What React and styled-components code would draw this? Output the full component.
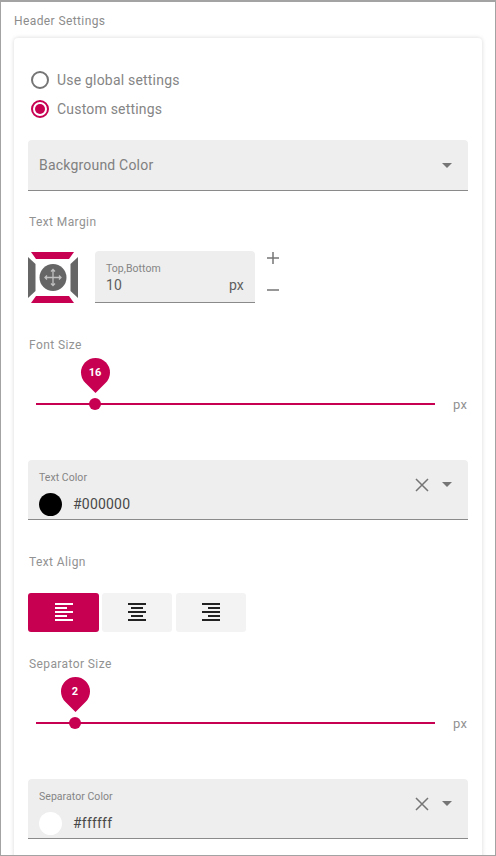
import styled, { createGlobalStyle } from 'styled-components'

const accent = '#c70052'

const Global = createGlobalStyle`
  html, body { margin: 0; padding: 0; background: #fff; }
  body { font-family: Roboto, "Liberation Sans", sans-serif; }
`

const Frame = styled.div`
  box-sizing: border-box;
  width: 496px;
  height: 856px;
  overflow: hidden;
  border: 1px solid #a3a3a3;
  border-top-width: 2px;
  background: #fff;
`

const Title = styled.div`
  margin: 11px 0 0 13px;
  height: 16px;
  font-size: 12px;
  line-height: 16px;
  letter-spacing: 0.4px;
  color: #8c8c8c;
`

const Card = styled.section`
  box-sizing: border-box;
  margin: 9px 13px 0;
  height: 900px;
  padding: 27px 14px 0;
  border-radius: 4px 4px 0 0;
  background: #fff;
  box-shadow: 0 0 4px rgba(0, 0, 0, 0.16);
`

const RadioRow = styled.div`
  display: flex;
  align-items: center;
  gap: 8px;
  height: 29px;
  padding-left: 3px;
  font-size: 14px;
  letter-spacing: 0.2px;
  color: #858585;
`

const RadioMark = styled.span`
  box-sizing: border-box;
  display: flex;
  align-items: center;
  justify-content: center;
  width: 18px;
  height: 18px;
  border-radius: 50%;
  border: 2px solid ${p => (p.$on ? accent : '#757575')};
  &::after {
    content: '';
    display: ${p => (p.$on ? 'block' : 'none')};
    width: 10px;
    height: 10px;
    border-radius: 50%;
    background: ${accent};
  }
`

const Field = styled.div`
  box-sizing: border-box;
  display: flex;
  align-items: center;
  height: ${p => p.$h || 60}px;
  margin-top: ${p => p.$mt || 0}px;
  padding: 0 16.5px 0 11px;
  border-radius: 4px 4px 0 0;
  border-bottom: 1px solid #8a8a8a;
  background: #eeeeee;
`

const FieldBody = styled.div`
  flex: 1;
  min-width: 0;
  padding-top: ${p => p.$pt || 0}px;
`

const Placeholder = styled.div`
  font-size: 14px;
  letter-spacing: 0.2px;
  color: #808080;
`

const SmallLabel = styled.div`
  font-size: 10.5px;
  line-height: 12px;
  letter-spacing: 0.05px;
  color: #858585;
`

const ColorValue = styled.div`
  display: flex;
  align-items: center;
  gap: 11px;
  margin-top: 9px;
  font-size: 14px;
  letter-spacing: 0.2px;
  color: #484848;
`

const Swatch = styled.span`
  width: 23px;
  height: 23px;
  border-radius: 50%;
  background: ${p => p.$color};
`

const Arrow = styled.span`
  flex: none;
  width: 0;
  height: 0;
  border-left: 5px solid transparent;
  border-right: 5px solid transparent;
  border-top: 5px solid #757575;
`

const FieldActions = styled.div`
  display: flex;
  align-items: center;
  gap: 13px;
  margin-bottom: 10px;
`

const ClearIcon = styled.svg`
  display: block;
  width: 14px;
  height: 14px;
`

const SectionLabel = styled.div`
  height: 16px;
  margin-top: ${p => p.$mt}px;
  padding-left: 1px;
  font-size: 12px;
  line-height: 16px;
  letter-spacing: 0.4px;
  color: #929292;
`

const MarginRow = styled.div`
  display: flex;
  align-items: flex-start;
  margin-top: 21px;
`

const MarginPicker = styled.svg`
  flex: none;
  width: 50px;
  height: 51px;
  margin-top: 1px;
`

const NumberField = styled.div`
  box-sizing: border-box;
  width: 160px;
  height: 52px;
  margin-left: 17px;
  padding: 12px 11px 0;
  border-radius: 4px 4px 0 0;
  border-bottom: 1px solid #8a8a8a;
  background: #eeeeee;
`

const NumberLine = styled.div`
  display: flex;
  justify-content: space-between;
  margin-top: 1px;
  font-size: 14px;
  line-height: 18px;
  letter-spacing: 0.2px;
  color: #5e5e5e;
`

const Stepper = styled.div`
  display: flex;
  flex-direction: column;
  gap: 18px;
  margin-left: 11px;
`

const StepIcon = styled.svg`
  display: block;
  width: 14px;
  height: 14px;
`

const SliderRow = styled.div`
  display: flex;
  align-items: center;
  height: 16px;
  margin-top: ${p => p.$mt}px;
`

const Track = styled.div`
  position: relative;
  width: 399px;
  height: 2px;
  margin-left: 8px;
  background: ${accent};
`

const Thumb = styled.span`
  position: absolute;
  top: -5px;
  width: 12px;
  height: 12px;
  margin-left: -6px;
  border-radius: 50%;
  background: ${accent};
`

const Bubble = styled.span`
  position: absolute;
  top: -45px;
  width: 29px;
  height: 29px;
  margin-left: -14.5px;
  border-radius: 50% 50% 0 50%;
  transform: rotate(45deg);
  background: ${accent};
`

const BubbleText = styled.span`
  position: absolute;
  top: -37px;
  width: 29px;
  margin-left: -14.5px;
  text-align: center;
  font-size: 11px;
  line-height: 14px;
  font-weight: 700;
  color: #fff;
`

const Unit = styled.span`
  margin-left: 18px;
  font-size: 13px;
  letter-spacing: 0.3px;
  color: #929292;
`

const AlignRow = styled.div`
  display: flex;
  gap: 3px;
  margin-top: 23px;
`

const AlignButton = styled.div`
  display: flex;
  align-items: center;
  justify-content: center;
  width: ${p => p.$w}px;
  height: 39px;
  margin-right: ${p => p.$mr || 0}px;
  border-radius: 3px;
  background: ${p => (p.$on ? accent : '#f3f3f3')};
  color: ${p => (p.$on ? '#fff' : '#222')};
`

const AlignSvg = styled.svg`
  display: block;
  margin-bottom: 2px;
`

const AlignIcon = ({ bars }) => (
  <AlignSvg width="18" height="18" viewBox="0 0 18 18" fill="currentColor">
    {bars.map(([x, w], i) => (
      <rect key={i} x={x} y={i * 4} width={w} height="2" />
    ))}
  </AlignSvg>
)

const Slider = ({ mt, value, at }) => (
  <SliderRow $mt={mt}>
    <Track>
      <Bubble style={{ left: at }} />
      <BubbleText style={{ left: at }}>{value}</BubbleText>
      <Thumb style={{ left: at }} />
    </Track>
    <Unit>px</Unit>
  </SliderRow>
)

const ColorField = ({ mt, label, color, value }) => (
  <Field $mt={mt}>
    <FieldBody $pt={8}>
      <SmallLabel>{label}</SmallLabel>
      <ColorValue>
        <Swatch $color={color} />
        {value}
      </ColorValue>
    </FieldBody>
    <FieldActions>
      <ClearIcon viewBox="0 0 14 14" fill="none" stroke="#757575" strokeWidth="1.5">
        <path d="M1 1l12 12M13 1L1 13" />
      </ClearIcon>
      <Arrow />
    </FieldActions>
  </Field>
)

export default function App() {
  return (
    <>
      <Global />
      <Frame>
        <Title>Header Settings</Title>
        <Card>
          <RadioRow><RadioMark />Use global settings</RadioRow>
          <RadioRow><RadioMark $on />Custom settings</RadioRow>

          <Field $h={51} $mt={17}>
            <FieldBody><Placeholder>Background Color</Placeholder></FieldBody>
            <Arrow />
          </Field>

          <SectionLabel $mt={23}>Text Margin</SectionLabel>
          <MarginRow>
            <MarginPicker viewBox="0 0 50 51">
              <path d="M3 0h43l-5 7H8z" fill={accent} />
              <path d="M3 51h43l-5-7H8z" fill={accent} />
              <path d="M0 5l7.5 7v27L0 46z" fill="#666" />
              <path d="M50 5l-7.5 7v27l7.5 7z" fill="#666" />
              <circle cx="25" cy="25.5" r="13.5" fill="#666" />
              <path d="M25 17.5v16M17 25.5h16M23 19.5l2-2 2 2M23 31.5l2 2 2-2M19 23.5l-2 2 2 2M31 23.5l2 2-2 2" fill="none" stroke="#c0c0c0" strokeWidth="1.3" />
            </MarginPicker>
            <NumberField>
              <SmallLabel>Top,Bottom</SmallLabel>
              <NumberLine><span>10</span><span>px</span></NumberLine>
            </NumberField>
            <Stepper>
              <StepIcon viewBox="0 0 14 14" stroke="#757575" strokeWidth="1.5">
                <path d="M7 1v12M1 7h12" />
              </StepIcon>
              <StepIcon viewBox="0 0 14 14" stroke="#757575" strokeWidth="1.5">
                <path d="M1 7h12" />
              </StepIcon>
            </Stepper>
          </MarginRow>

          <SectionLabel $mt={34}>Font Size</SectionLabel>
          <Slider mt={43} value={16} at={59} />

          <ColorField mt={48} label="Text Color" color="#000" value="#000000" />

          <SectionLabel $mt={34}>Text Align</SectionLabel>
          <AlignRow>
            <AlignButton $w={71} $on>
              <AlignIcon bars={[[0, 18], [0, 12], [0, 18], [0, 12], [0, 18]]} />
            </AlignButton>
            <AlignButton $w={70} $mr={1}>
              <AlignIcon bars={[[0, 18], [3, 12], [0, 18], [3, 12], [0, 18]]} />
            </AlignButton>
            <AlignButton $w={70}>
              <AlignIcon bars={[[0, 18], [6, 12], [0, 18], [6, 12], [0, 18]]} />
            </AlignButton>
          </AlignRow>

          <SectionLabel $mt={24}>Separator Size</SectionLabel>
          <Slider mt={43} value={2} at={39} />

          <ColorField mt={48} label="Separator Color" color="#fff" value="#ffffff" />
        </Card>
      </Frame>
    </>
  )
}
